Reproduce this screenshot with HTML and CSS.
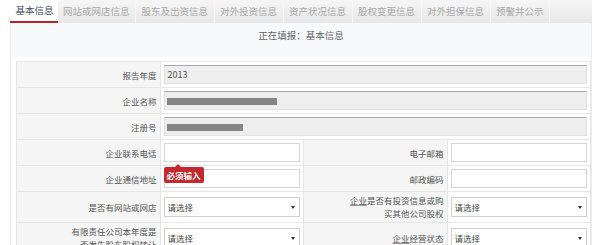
FILE: index.html
```html
<!DOCTYPE html>
<html lang="zh-CN">
<head>
    <meta charset="UTF-8">
    <title>年度报告填报 - 基本信息</title>
    <link rel="stylesheet" href="styles.css">
</head>
<body>
    <div class="page">
        <ul class="tabs">
            <li class="tab active">基本信息</li>
            <li class="tab">网站或网店信息</li>
            <li class="tab">股东及出资信息</li>
            <li class="tab">对外投资信息</li>
            <li class="tab">资产状况信息</li>
            <li class="tab">股权变更信息</li>
            <li class="tab">对外担保信息</li>
            <li class="tab">预警并公示</li>
        </ul>

        <div class="panel">
            <div class="panel-head">正在填报：基本信息</div>

            <table class="form-table">
                <colgroup>
                    <col class="c-label">
                    <col class="c-value">
                    <col class="c-label">
                    <col class="c-value">
                </colgroup>
                <tr class="row-std">
                    <th>报告年度</th>
                    <td colspan="3"><div class="field disabled">2013</div></td>
                </tr>
                <tr class="row-std">
                    <th>企业名称</th>
                    <td colspan="3"><div class="field disabled"><span class="mask" style="width: 110px;"></span></div></td>
                </tr>
                <tr class="row-std">
                    <th>注册号</th>
                    <td colspan="3"><div class="field disabled"><span class="mask" style="width: 76px;"></span></div></td>
                </tr>
                <tr class="row-std">
                    <th>企业联系电话</th>
                    <td><div class="field"></div></td>
                    <th>电子邮箱</th>
                    <td><div class="field"></div></td>
                </tr>
                <tr class="row-std">
                    <th>企业通信地址</th>
                    <td class="has-tip">
                        <div class="field"></div>
                        <div class="tip">必须输入</div>
                    </td>
                    <th>邮政编码</th>
                    <td><div class="field"></div></td>
                </tr>
                <tr class="row-tall">
                    <th>是否有网站或网店</th>
                    <td><div class="select"><span>请选择</span><i class="arrow"></i></div></td>
                    <th class="two-line"><u>企业</u>是否有投资信息或购<br>买其他公司股权</th>
                    <td><div class="select"><span>请选择</span><i class="arrow"></i></div></td>
                </tr>
                <tr class="row-tall">
                    <th class="two-line">有限责任公司本年度是<br>否发生股东股权转让</th>
                    <td><div class="select"><span>请选择</span><i class="arrow"></i></div></td>
                    <th><u>企业</u>经营状态</th>
                    <td><div class="select"><span>请选择</span><i class="arrow"></i></div></td>
                </tr>
            </table>
        </div>
    </div>
</body>
</html>
```

FILE: styles.css
```css
/* General styles */
body {
    margin: 0;
    font-family: "Noto Sans CJK SC", "Liberation Sans", sans-serif;
    color: #555;
    background: #fff;
}

.page {
    width: 582px;
    margin-left: 10px;
}

/* Tab bar */
.tabs {
    display: flex;
    margin: 0;
    padding: 0;
    list-style: none;
    height: 23px;
    background: linear-gradient(#f6f6f6, #e7e7e7);
}

.tab {
    padding: 0 5.5px;
    line-height: 22px;
    font-size: 9.5px;
    color: #a9a9a9;
    border-right: 1px solid #f7f7f7;
    white-space: nowrap;
}

.tab.active {
    background: #fff;
    color: #3f4d66;
    border-bottom: 2px solid #b3272c;
    border-right: none;
    padding-right: 4px;
    line-height: 21px;
}

/* Panel */
.panel {
    border-left: 1px solid #ececec;
    border-right: 1px solid #ececec;
    padding: 0 1px 0 5px;
}

.panel-head {
    height: 34px;
    line-height: 24px;
    margin: 0 -1px 0 -5px;
    background: #f8f9fb;
    text-align: center;
    font-size: 9.5px;
    color: #666;
}

/* Form table */
.form-table {
    width: 575px;
    margin-top: 4px;
    border-collapse: collapse;
    table-layout: fixed;
}

.c-label,
.c-value {
    width: 143.5px;
}

.form-table th,
.form-table td {
    border: 1px solid #e6e6e6;
    padding: 0 3px;
}

.form-table th {
    background: #f5f5f5;
    font-weight: normal;
    font-size: 8.5px;
    line-height: 12px;
    text-align: right;
    color: #555;
    white-space: nowrap;
}

.form-table th u {
    text-decoration-color: #999;
}

.form-table th.two-line {
    line-height: 13px;
}

.row-std {
    height: 26px;
}

.row-tall {
    height: 31px;
}

/* Inputs */
.field {
    height: 19px;
    box-sizing: border-box;
    border: 1px solid #d6d6d6;
    background: #fff;
    font-size: 9px;
    line-height: 17px;
    padding-left: 3px;
    color: #555;
}

.field.disabled {
    background: #eee;
    border-color: #e2e2e2;
    border-top: 1px solid #a8a8a8;
}

.mask {
    display: inline-block;
    height: 7px;
    background: #858585;
    vertical-align: middle;
    margin-left: -1px;
}

.select {
    display: flex;
    justify-content: space-between;
    align-items: center;
    height: 20px;
    box-sizing: border-box;
    border: 1px solid #d0d0d0;
    background: #fff;
    padding: 0 4px 0 3px;
    font-size: 8.5px;
    color: #444;
}

.arrow {
    width: 0;
    height: 0;
    border-left: 2px solid transparent;
    border-right: 2px solid transparent;
    border-top: 3px solid #333;
}

/* Validation tooltip */
.has-tip {
    position: relative;
}

.tip {
    position: absolute;
    left: 3px;
    top: 1px;
    padding: 0 3px;
    height: 16px;
    line-height: 16px;
    background: #c22a2f;
    border-radius: 2px;
    color: #fff;
    font-size: 8.5px;
    font-weight: bold;
}

.tip::before {
    content: "";
    position: absolute;
    left: 11px;
    top: -3px;
    border-left: 3px solid transparent;
    border-right: 3px solid transparent;
    border-bottom: 3px solid #c22a2f;
}
```
